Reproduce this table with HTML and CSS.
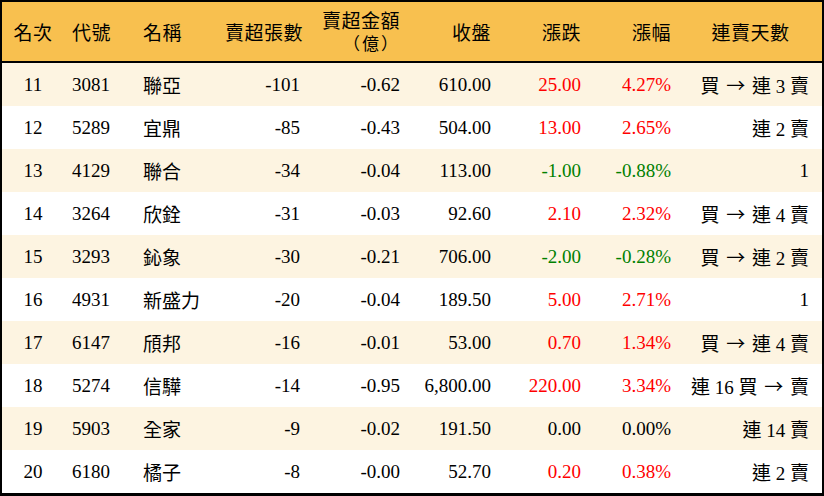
FILE: index.html
```html
<!DOCTYPE html>
<html lang="zh-Hant">
<head>
<meta charset="utf-8">
<title>賣超排行</title>
<link rel="stylesheet" href="styles.css">
</head>
<body>
<div class="board">
  <div class="row head">
    <div class="c1">名次</div>
    <div class="c2">代號</div>
    <div class="c3">名稱</div>
    <div class="c4">賣超張數</div>
    <div class="c5 two"><span class="line">賣超金額</span><span class="line paren">（億）</span></div>
    <div class="c6">收盤</div>
    <div class="c7">漲跌</div>
    <div class="c8">漲幅</div>
    <div class="c9 center">連賣天數</div>
  </div>
  <div class="row odd">
    <div class="c1">11</div><div class="c2">3081</div><div class="c3">聯亞</div><div class="c4">-101</div><div class="c5">-0.62</div><div class="c6">610.00</div><div class="c7 up">25.00</div><div class="c8 up">4.27%</div><div class="c9">買 <span class="arr">→</span> 連 3 賣</div>
  </div>
  <div class="row">
    <div class="c1">12</div><div class="c2">5289</div><div class="c3">宜鼎</div><div class="c4">-85</div><div class="c5">-0.43</div><div class="c6">504.00</div><div class="c7 up">13.00</div><div class="c8 up">2.65%</div><div class="c9">連 2 賣</div>
  </div>
  <div class="row odd">
    <div class="c1">13</div><div class="c2">4129</div><div class="c3">聯合</div><div class="c4">-34</div><div class="c5">-0.04</div><div class="c6">113.00</div><div class="c7 down">-1.00</div><div class="c8 down">-0.88%</div><div class="c9">1</div>
  </div>
  <div class="row">
    <div class="c1">14</div><div class="c2">3264</div><div class="c3">欣銓</div><div class="c4">-31</div><div class="c5">-0.03</div><div class="c6">92.60</div><div class="c7 up">2.10</div><div class="c8 up">2.32%</div><div class="c9">買 <span class="arr">→</span> 連 4 賣</div>
  </div>
  <div class="row odd">
    <div class="c1">15</div><div class="c2">3293</div><div class="c3">鈊象</div><div class="c4">-30</div><div class="c5">-0.21</div><div class="c6">706.00</div><div class="c7 down">-2.00</div><div class="c8 down">-0.28%</div><div class="c9">買 <span class="arr">→</span> 連 2 賣</div>
  </div>
  <div class="row">
    <div class="c1">16</div><div class="c2">4931</div><div class="c3">新盛力</div><div class="c4">-20</div><div class="c5">-0.04</div><div class="c6">189.50</div><div class="c7 up">5.00</div><div class="c8 up">2.71%</div><div class="c9">1</div>
  </div>
  <div class="row odd">
    <div class="c1">17</div><div class="c2">6147</div><div class="c3">頎邦</div><div class="c4">-16</div><div class="c5">-0.01</div><div class="c6">53.00</div><div class="c7 up">0.70</div><div class="c8 up">1.34%</div><div class="c9">買 <span class="arr">→</span> 連 4 賣</div>
  </div>
  <div class="row">
    <div class="c1">18</div><div class="c2">5274</div><div class="c3">信驊</div><div class="c4">-14</div><div class="c5">-0.95</div><div class="c6">6,800.00</div><div class="c7 up">220.00</div><div class="c8 up">3.34%</div><div class="c9">連 16 買 <span class="arr">→</span> 賣</div>
  </div>
  <div class="row odd">
    <div class="c1">19</div><div class="c2">5903</div><div class="c3">全家</div><div class="c4">-9</div><div class="c5">-0.02</div><div class="c6">191.50</div><div class="c7">0.00</div><div class="c8">0.00%</div><div class="c9">連 14 賣</div>
  </div>
  <div class="row">
    <div class="c1">20</div><div class="c2">6180</div><div class="c3">橘子</div><div class="c4">-8</div><div class="c5">-0.00</div><div class="c6">52.70</div><div class="c7 up">0.20</div><div class="c8 up">0.38%</div><div class="c9">連 2 賣</div>
  </div>
</div>
</body>
</html>
```

FILE: styles.css
```css
* { box-sizing: border-box; }
html, body {
  margin: 0;
  padding: 0;
  background: #ffffff;
}
body {
  font-family: "Liberation Serif", "Noto Sans CJK TC", serif;
  font-size: 19px;
  color: #000;
}
.board {
  width: 824px;
  height: 496px;
  border: 2px solid #000;
  border-bottom-width: 3px;
  background: #fff;
}
.row {
  display: grid;
  grid-template-columns: 62px 66px 85px 95px 100px 91px 90px 90px 141px;
  height: 43px;
  align-items: center;
  white-space: nowrap;
}
.row.odd { background: #fdf4e1; }
.row.head {
  height: 61px;
  background: #f8c04f;
  border-bottom: 2px solid #000;
}
.row.head > div { letter-spacing: 0.5px; }
.row > div {
  padding: 0 10px;
  text-align: right;
}
.row > .c1 { text-align: center; padding: 0; }
.row > .c2 { text-align: left; padding-left: 8px; }
.row > .c3 { text-align: left; padding-left: 13px; }
.row > .c9 { padding-right: 13px; }
.row > .center { text-align: center; padding-right: 12px; }
.row > .two {
  display: flex;
  flex-direction: column;
  align-items: flex-end;
  line-height: 21px;
}
.line { display: block; }
.paren {
  font-family: "Noto Sans CJK TC", sans-serif;
  font-size: 17px;
  letter-spacing: 2px;
}
.arr {
  font-family: "Noto Sans CJK TC", sans-serif;
  font-size: 19px;
  margin: 0 2px;
}
.up { color: #ff0000; }
.down { color: #008000; }
```
